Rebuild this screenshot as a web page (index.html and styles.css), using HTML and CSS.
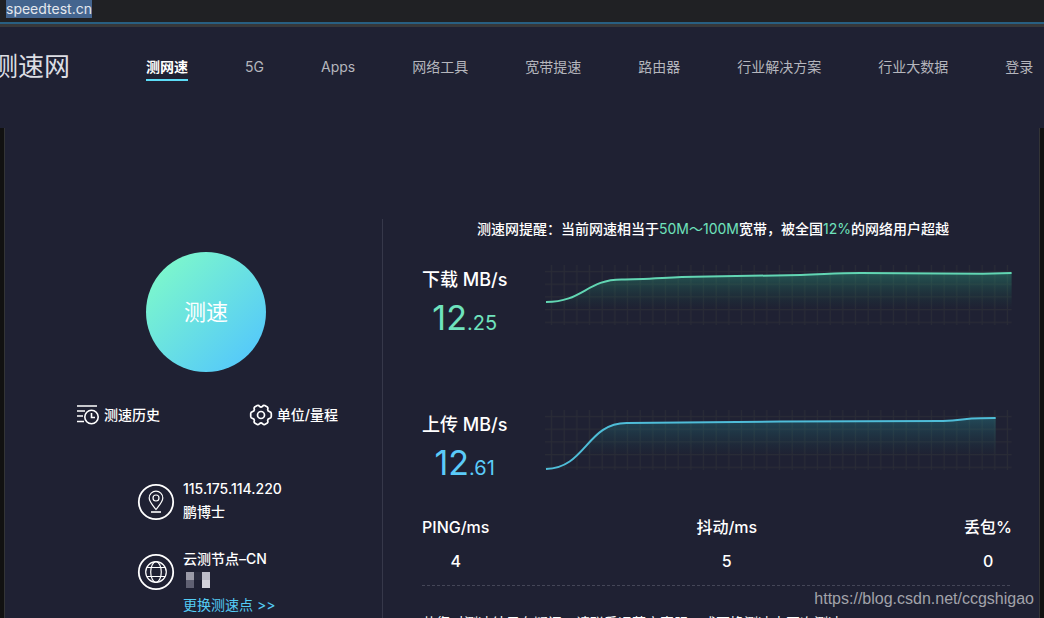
FILE: index.html
```html
<!DOCTYPE html>
<html lang="zh-CN">
<head>
    <meta charset="UTF-8">
    <title>测速网</title>
    <link rel="stylesheet" href="styles.css">
</head>
<body>
    <div class="address-bar">
        <input class="address" type="text" value="speedtest.cn" aria-label="地址">
    </div>

    <header class="header">
        <div class="logo"><span>测速网</span></div>
        <nav class="nav">
            <a class="active" href="#">测网速</a>
            <a href="#">5G</a>
            <a href="#">Apps</a>
            <a href="#">网络工具</a>
            <a href="#">宽带提速</a>
            <a href="#">路由器</a>
            <a href="#">行业解决方案</a>
            <a href="#">行业大数据</a>
            <a href="#">登录</a>
        </nav>
    </header>

    <main class="panel">
        <section class="left">
            <button class="btn-start" type="button">测速</button>
            <div class="tools">
                <button class="btn-tool" type="button">
                    <svg width="24" height="22" viewBox="0 0 24 22" fill="none" stroke="#fff" stroke-width="1.6">
                        <path d="M1 2h20M1 7h8M1 12h6M1 17.500h7"/>
                        <circle cx="15.500" cy="13" r="6.700"/>
                        <path d="M15.500 9v4.500h3.500"/>
                    </svg>
                    测速历史
                </button>
                <button class="btn-tool" type="button">
                    <svg width="24" height="22" viewBox="0 0 24 22" fill="none" stroke="#fff" stroke-width="1.7" stroke-linejoin="round">
                        <path d="M8.200 1.500Q9.800 1 10.500 2.300Q12 3.700 13.500 2.300Q14.200 1 15.800 1.500L18.300 2.900Q19.300 3.800 18.700 5.200Q18.400 7.200 20.500 7.600Q22.300 8 22.300 9.500V12.500Q22.300 14 20.500 14.400Q18.400 14.800 18.700 16.800Q19.300 18.200 18.300 19.100L15.800 20.500Q14.200 21 13.500 19.700Q12 18.300 10.500 19.700Q9.800 21 8.200 20.500L5.700 19.100Q4.700 18.200 5.300 16.800Q5.600 14.800 3.500 14.400Q1.700 14 1.700 12.500V9.500Q1.700 8 3.500 7.600Q5.600 7.200 5.300 5.200Q4.700 3.800 5.700 2.900Z"/>
                        <circle cx="12" cy="11" r="3.500"/>
                    </svg>
                    单位/量程
                </button>
            </div>
            <div class="info">
                <svg width="38" height="38" viewBox="0 0 38 38" fill="none" stroke="#fff">
                    <circle cx="19" cy="19" r="17.200" stroke-width="1.800"/>
                    <path d="M19 26.500C15 21.500 12.200 18.500 12.200 15A6.800 6.800 0 0 1 25.800 15C25.800 18.500 23 21.500 19 26.500Z" stroke-width="1.200"/>
                    <circle cx="19" cy="15" r="3" stroke-width="1.200"/>
                    <path d="M14 29h10" stroke-width="1.600"/>
                </svg>
                <div class="info-text">
                    <span>115.175.114.220</span>
                    <span>鹏博士</span>
                </div>
            </div>
            <div class="info">
                <svg width="38" height="38" viewBox="0 0 38 38" fill="none" stroke="#fff">
                    <circle cx="19" cy="19" r="17.200" stroke-width="1.800"/>
                    <g stroke-width="1.200">
                        <circle cx="19" cy="19" r="10.300"/>
                        <ellipse cx="19" cy="19" rx="5.300" ry="10.300"/>
                        <path d="M10 14.500h18M10 23.500h18"/>
                    </g>
                </svg>
                <div class="info-text">
                    <span>云测节点–CN</span>
                    <svg class="mosaic" width="24" height="16" viewBox="0 0 24 16">
                        <path fill="#9b9ba8" d="M0 0h8v8H0z"/>
                        <path fill="#2a2c3e" d="M8 0h8v8H8z"/>
                        <path fill="#bcbcc8" d="M16 0h8v8h-8z"/>
                        <path fill="#5f6072" d="M0 8h8v8H0z"/>
                        <path fill="#d3d3dc" d="M16 8h8v8h-8z"/>
                    </svg>
                    <a href="#">更换测速点 &gt;&gt;</a>
                </div>
            </div>
        </section>

        <section class="right">
            <p class="tip">测速网提醒：当前网速相当于<em>50M～100M</em>宽带，被全国<em>12%</em>的网络用户超越</p>

            <div class="speed download">
                <div class="speed-value">
                    <h2>下载 MB/s</h2>
                    <strong>12<small>.25</small></strong>
                </div>
                <svg class="chart" viewBox="0 0 469 60" preserveAspectRatio="none">
                    <defs>
                        <pattern id="grid" x="0.300" y="0" width="12.730" height="12.700" patternUnits="userSpaceOnUse">
                            <path d="M6.300 0v12.700M0 6.500h12.730" stroke="#292b36" stroke-width="1.200"/>
                        </pattern>
                        <linearGradient id="fillDown" x1="0" y1="0" x2="0" y2="1">
                            <stop offset="0" stop-color="#31b58d" stop-opacity=".36"/>
                            <stop offset="1" stop-color="#126a50" stop-opacity="0"/>
                        </linearGradient>
                    </defs>
                    <rect width="469" height="60" fill="url(#grid)"/>
                    <path fill="url(#fillDown)" d="M1 37C38 37 42 14.500 77 14.500C100 14.500 130 12 150 11.800L257 10C280 9.500 290 8 317 8L440 8.800L469 8V44H1Z"/>
                    <path fill="none" stroke="#62d6b3" stroke-width="2" d="M1 37C38 37 42 14.500 77 14.500C100 14.500 130 12 150 11.800L257 10C280 9.500 290 8 317 8L440 8.800L469 8"/>
                </svg>
            </div>

            <div class="speed upload">
                <div class="speed-value">
                    <h2>上传 MB/s</h2>
                    <strong>12<small>.61</small></strong>
                </div>
                <svg class="chart" viewBox="0 0 469 60" preserveAspectRatio="none">
                    <defs>
                        <linearGradient id="fillUp" x1="0" y1="0" x2="0" y2="1">
                            <stop offset="0" stop-color="#2998a0" stop-opacity=".34"/>
                            <stop offset="1" stop-color="#126060" stop-opacity="0"/>
                        </linearGradient>
                    </defs>
                    <rect width="469" height="60" fill="url(#grid)"/>
                    <path fill="url(#fillUp)" d="M29 46C48 30 53 13 82 13L237 11.500L400 11C420 10.500 420 8.300 438 8.300L453 8V46Z"/>
                    <path fill="none" stroke="#4fbdd8" stroke-width="2" d="M1 59C41 58 42 13 82 13L237 11.500L400 11C420 10.500 420 8.300 438 8.300L453 8"/>
                </svg>
            </div>

            <dl class="stats">
                <div><dt>PING/ms</dt><dd>4</dd></div>
                <div><dt>抖动/ms</dt><dd>5</dd></div>
                <div><dt>丢包%</dt><dd>0</dd></div>
            </dl>
            <svg class="divider" height="1"><path d="M0 .5H2000" stroke="#444657" stroke-dasharray="3 2"/></svg>
            <p class="note">若您对测速结果有疑问，请联系运营商客服，或更换测速点再次测速</p>
        </section>
    </main>

    <div class="watermark">https://blog.csdn.net/ccgshigao</div>
</body>
</html>
```
FILE: styles.css
```css
* {
    box-sizing: border-box;
    margin: 0;
    padding: 0;
}
body {
    display: flex;
    flex-direction: column;
    height: 100vh;
    overflow: hidden;
    background: #1f2133;
    color: #fff;
    font: 14px/20px Inter, "Noto Sans CJK SC", sans-serif;
}
a {
    color: inherit;
    text-decoration: none;
}
button {
    border: 0;
    background: none;
    color: inherit;
    font: inherit;
    cursor: pointer;
}

/* browser bar */
.address-bar {
    flex: none;
    height: 27px;
    padding-left: 6px;
    background: #202124;
    border-bottom: 3px solid #37383a;
    box-shadow: inset 0 -2px #285f82;
}
.address {
    display: block;
    width: 86px;
    height: 18px;
    border: 0;
    outline: 0;
    background: #44658f;
    color: #e4e8ee;
    font: 14px/18px Inter, sans-serif;
}

/* header */
.header {
    flex: none;
    display: flex;
    align-items: center;
    height: 101px;
    padding-bottom: 21px;
}
.logo {
    flex: none;
    display: flex;
    justify-content: flex-end;
    width: 70px;
    overflow: hidden;
    color: #dcdde3;
    font-size: 26px;
    line-height: 32px;
    white-space: nowrap;
}
.nav {
    display: flex;
    gap: 57px;
    margin-left: 76px;
    color: #b5b6bd;
    white-space: nowrap;
}
.nav a {
    padding: 4px 0 2px;
    border-bottom: 2px solid transparent;
}
.nav .active {
    border-color: #5ddcf7;
    color: #fff;
    font-weight: 700;
}

/* main panel */
.panel {
    flex: 1;
    display: flex;
    min-height: 0;
    padding-top: 91px;
    border: solid #111;
    border-width: 0 4px;
    box-shadow: inset 1px 0 #333436, inset -1px 0 #333436;
}
.left {
    flex: 0 0 379px;
    display: flex;
    flex-direction: column;
    padding: 33px 44px 0 72px;
    border-right: 1px solid #36384a;
}
.btn-start {
    flex: none;
    align-self: center;
    width: 120px;
    height: 120px;
    margin-right: 2px;
    border-radius: 50%;
    background: linear-gradient(135deg, #7df8cb 10%, #54c8fb 90%);
    font-size: 22px;
}
.tools {
    display: flex;
    justify-content: space-between;
    margin: 32px 0 51px;
    font-weight: 500;
}
.btn-tool {
    display: flex;
    align-items: center;
    gap: 4px;
}
.info {
    display: flex;
    align-items: flex-start;
    gap: 8px;
    margin: 0 0 24px 61px;
}
.info > svg {
    flex: none;
    margin-top: 6px;
}
.info-text {
    display: flex;
    flex-direction: column;
    font-weight: 500;
    line-height: 23px;
    white-space: nowrap;
}
.info-text a {
    color: #55ccf5;
    font-weight: 400;
}
.mosaic {
    margin: 2px 0 5px 3px;
}

/* results */
.right {
    flex: 1;
    min-width: 0;
    padding: 0 28px 0 39px;
}
.tip {
    padding-right: 8px;
    text-align: center;
    font-weight: 500;
}
.tip em {
    color: #6fe3bd;
    font-style: normal;
    font-weight: 400;
}
.speed {
    display: flex;
    gap: 38px;
    padding-top: 26px;
}
.download {
    padding-bottom: 43px;
}
.upload {
    padding-bottom: 24px;
}
.speed-value {
    flex: 0 0 83px;
    text-align: center;
    white-space: nowrap;
}
.speed-value h2 {
    font-size: 18px;
    font-weight: 500;
    line-height: 30px;
}
.speed-value strong {
    display: block;
    font-size: 34px;
    font-weight: 400;
    line-height: 46px;
}
.speed-value small {
    font-size: 20px;
    line-height: 20px;
}
.download strong {
    color: #6fe3bd;
}
.upload strong {
    color: #5bcbf9;
}
.chart {
    flex: 1;
    min-width: 0;
    height: 60px;
}
.stats {
    display: flex;
    justify-content: space-between;
    text-align: center;
    font-size: 16px;
    font-weight: 500;
}
.stats dt,
.stats dd {
    line-height: 34px;
}
.divider {
    display: block;
    width: 100%;
    margin-top: 7px;
}
.note {
    margin-top: 27px;
    white-space: nowrap;
}
.watermark {
    position: absolute;
    right: 10px;
    bottom: 8px;
    color: #a2a3aa;
    font: 16px/22px "Liberation Sans", sans-serif;
}
```
